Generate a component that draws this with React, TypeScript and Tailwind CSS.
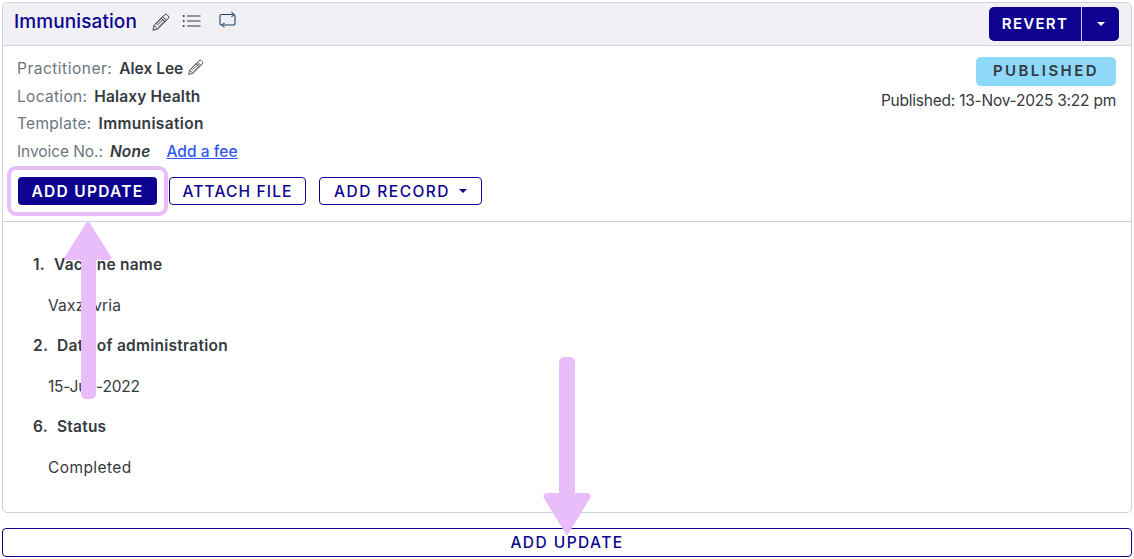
import React from "react";

function Pencil({ className }: { className?: string }) {
  return (
    <svg viewBox="0 0 16 16" className={className} fill="none" stroke="currentColor" strokeWidth="0.8">
      <path d="M11.3 1.6a1.600 1.600 0 0 1 2.300 0l.8.8a1.600 1.600 0 0 1 0 2.300L5.600 13.500l-4 1 1-4z" strokeLinejoin="round" />
      <path d="M10 3l3 3M8.600 4.400l3 3M2.600 10.500l3 3M3.800 9.300l6-6M5 10.500l6-6M6.400 11.900l6-6" />
    </svg>
  );
}

function ListIcon({ className }: { className?: string }) {
  return (
    <svg viewBox="0 0 19 14" className={className} fill="none" stroke="currentColor" strokeWidth="1.100">
      <path d="M5 2h13.500M5 7h13.500M5 12h13.500" />
      <circle cx="1.700" cy="2" r="1" fill="currentColor" stroke="none" />
      <circle cx="1.700" cy="7" r="1" fill="currentColor" stroke="none" />
      <circle cx="1.700" cy="12" r="1" fill="currentColor" stroke="none" />
    </svg>
  );
}

function RepeatIcon({ className }: { className?: string }) {
  return (
    <svg viewBox="0 0 17 18" className={className} fill="none" stroke="currentColor" strokeWidth="1.100">
      <path d="M13.500 3.500H2.500a1.500 1.500 0 0 0-1.500 1.500v7.500a1.500 1.500 0 0 0 1.500 1.500h1M5 14h9.500a1.500 1.500 0 0 0 1.500-1.500V5a1.500 1.500 0 0 0-1.500-1.500" />
      <path d="M12.500 1l2.200 2.500-2.200 2.500M5.500 11.800L3.300 14l2.200 2.500" />
    </svg>
  );
}

function Caret({ className }: { className?: string }) {
  return <span className={`inline-block w-0 h-0 border-x-[4px] border-x-transparent border-t-[4px] ${className ?? ""}`} />;
}

function Meta({ label, track, children }: { label: string; track: string; children: React.ReactNode }) {
  return (
    <div className="flex items-center h-[27.600px] whitespace-nowrap">
      <span className={`text-[#6c757d] mr-[7px] ${track}`}>{label}</span>
      {children}
    </div>
  );
}

function Field({ n, title, value, gap, track }: { n: string; title: string; value: string; gap: string; track: string }) {
  return (
    <div>
      <div className="flex font-semibold h-[24px] items-center pl-[30px] tracking-[0.25px]">
        <span className={gap}>{n}</span>
        <span>{title}</span>
      </div>
      <div className={`pl-[45px] mt-[17px] h-[24px] flex items-center ${track}`}>{value}</div>
    </div>
  );
}

export default function App() {
  return (
    <div className="relative w-[1134px] h-[559px] bg-white overflow-hidden text-[#343a40] text-[15.500px] font-['Inter',sans-serif] pt-[2px] px-[2px]">
      <div className="h-[511px] border border-[#ced4da] rounded-[5px] overflow-hidden">
        <div className="h-[43px] bg-[#f0f0f5] border-b border-[#ced4da] flex items-start justify-between pl-[11px] pr-[12px]">
          <div className="flex items-center h-[37px] pt-[1px] text-[#0e0391]">
            <span className="text-[19px] font-medium tracking-[0.1px]">Immunisation</span>
            <span className="flex items-center text-[#343a40] ml-[14px] gap-[12px]">
              <Pencil className="w-[19px] h-[19px]" />
              <ListIcon className="w-[19px] h-[14px] mb-[3px]" />
              <RepeatIcon className="w-[17px] h-[18px] ml-[6px] mb-[4px] text-[#1d3f66]" />
            </span>
          </div>
          <div className="flex mt-[4px] h-[34px] rounded-[5px] bg-[#0e0391] text-white font-semibold text-[15px] tracking-[1.300px]">
            <span className="w-[93px] flex items-center justify-center border-r border-white/80">REVERT</span>
            <span className="w-[37px] flex items-center justify-center"><Caret className="border-t-white" /></span>
          </div>
        </div>

        <div className="h-[176px] border-b border-[#ced4da] pl-[14px] pr-[15px] pt-[9px] flex justify-between">
          <div>
            <Meta label="Practitioner:" track="tracking-[0.5px]">
              <span className="font-semibold tracking-[0px]">Alex Lee</span>
              <Pencil className="w-[17px] h-[17px] ml-[4px] mb-[2px]" />
            </Meta>
            <Meta label="Location:" track="tracking-[0.3px]"><span className="font-semibold tracking-[0.15px]">Halaxy Health</span></Meta>
            <Meta label="Template:" track="tracking-[0.3px]"><span className="font-semibold tracking-[0.35px]">Immunisation</span></Meta>
            <Meta label="Invoice No.:" track="tracking-[-0.07px]">
              <span className="font-semibold italic tracking-[0.2px]">None</span>
              <a className="ml-[16px] text-[#2d57f5] underline font-medium tracking-[0.05px]">Add a fee</a>
            </Meta>
            <div className="flex mt-[12px] gap-[12px] h-[28px] text-[15.500px] tracking-[1.450px] font-medium text-[#0e0391] pl-px">
              <button className="w-[139px] rounded-[4px] bg-[#0e0391] text-white font-semibold tracking-[1.300px]">ADD UPDATE</button>
              <button className="w-[137px] rounded-[4px] border border-[#0e0391] bg-white tracking-[1.150px]">ATTACH FILE</button>
              <button className="w-[163px] rounded-[4px] border border-[#0e0391] bg-white flex items-center justify-center gap-[9px] ml-[1px]">
                ADD RECORD <Caret className="border-t-[#0e0391]" />
              </button>
            </div>
          </div>
          <div className="flex flex-col items-end pt-[2px]">
            <span className="w-[140px] h-[29px] rounded-[5px] bg-[#8ed8fa] flex items-center justify-center font-semibold text-[15px] tracking-[2.450px]">PUBLISHED</span>
            <span className="mt-[3px] tracking-[-0.23px]">Published: 13-Nov-2025 3:22 pm</span>
          </div>
        </div>

        <div className="pt-[31px] flex flex-col gap-[16px]">
          <Field n="1." title="Vaccine name" value="Vaxzevria" gap="mr-[9px]" track="tracking-[0.2px]" />
          <Field n="2." title="Date of administration" value="15-Jun-2022" gap="mr-[9px]" track="tracking-[-0.2px]" />
          <Field n="6." title="Status" value="Completed" gap="mr-[9px]" track="tracking-[0.4px]" />
        </div>
      </div>

      <button className="mt-[15px] w-full h-[29px] pt-[1px] rounded-[4px] border border-[#0e0391] text-[#0e0391] text-[15.500px] tracking-[1.450px] font-medium">ADD UPDATE</button>

      {/* annotation overlays */}
      <div className="absolute left-[7px] top-[166px] w-[161px] h-[50px] rounded-[9px] border-[4px] border-[#e9bdf9]" />
      <svg className="absolute left-0 top-0 pointer-events-none" width="1134" height="559" viewBox="0 0 1134 559" fill="#e9bdf9">
        <rect x="81" y="240" width="15" height="159" rx="5" />
        <path d="M88 222 L110 257 Q112 259 108 259 L68 259 Q64 259 66 257 Z" stroke="#e9bdf9" strokeWidth="2" strokeLinejoin="round" />
        <rect x="559" y="357" width="16" height="150" rx="5" />
        <path d="M567 534 L545 498 Q543 494 548 494 L586 494 Q591 494 589 498 Z" stroke="#e9bdf9" strokeWidth="2" strokeLinejoin="round" />
      </svg>
    </div>
  );
}
